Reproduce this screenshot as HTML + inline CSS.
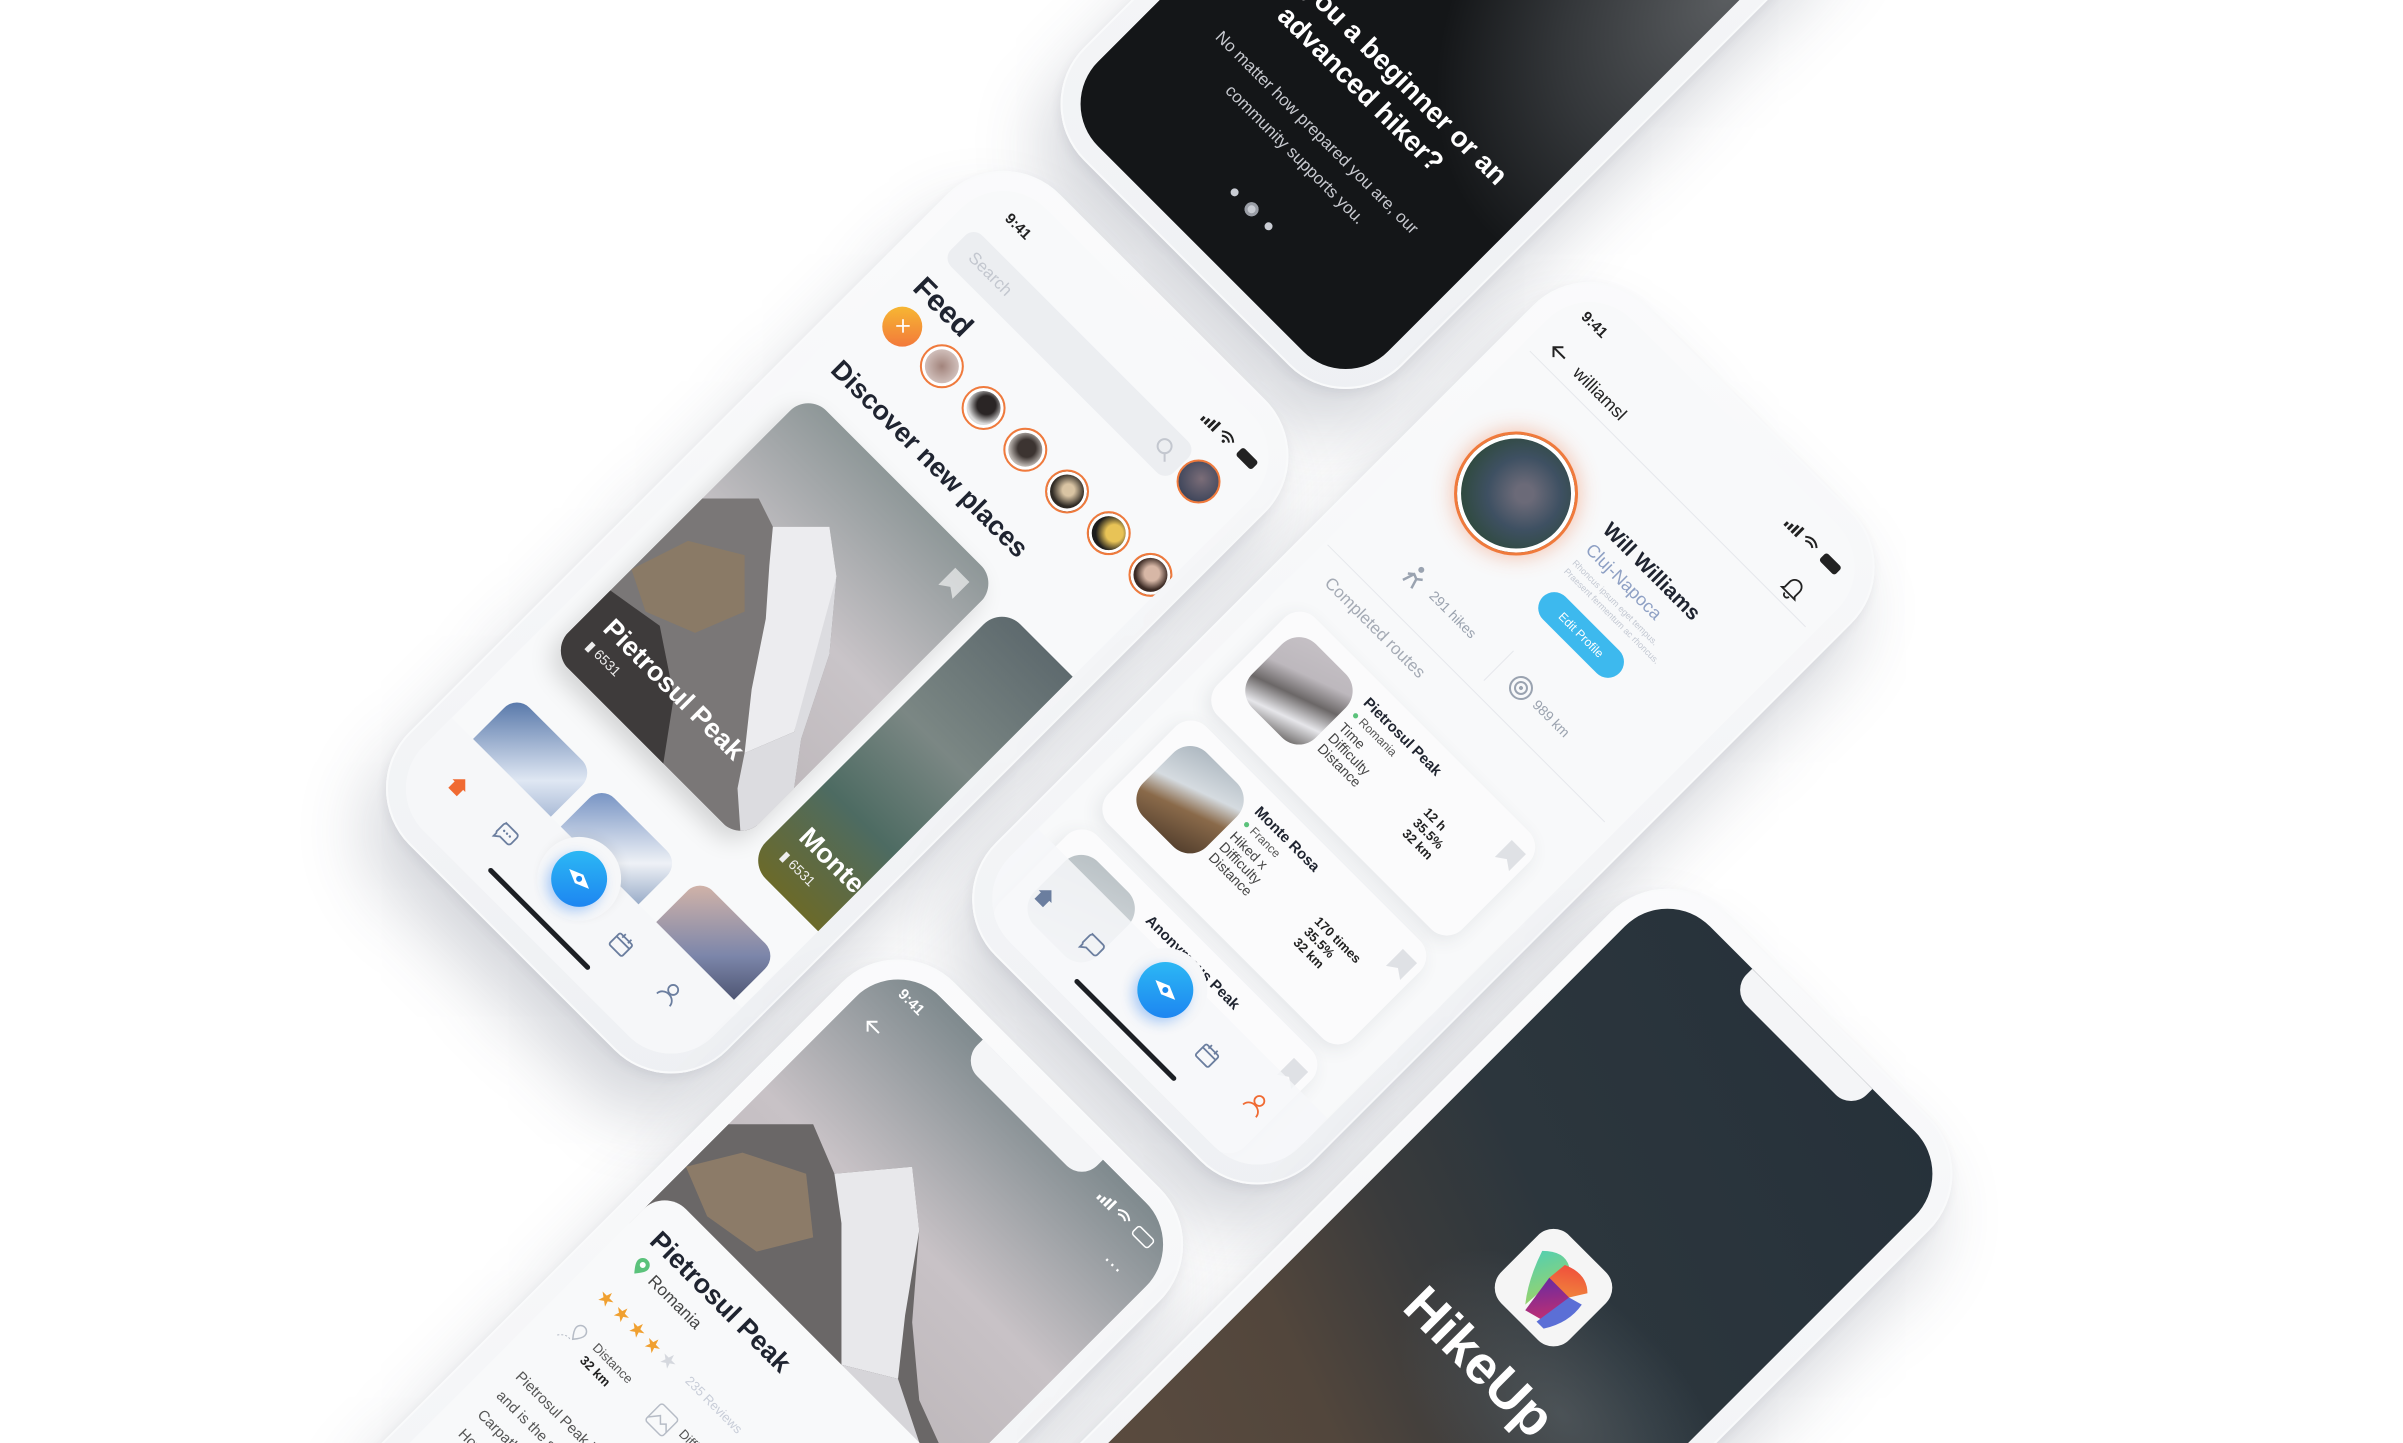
<!DOCTYPE html>
<html><head><meta charset="utf-8">
<style>
html,body{margin:0;padding:0;width:2403px;height:1443px;overflow:hidden;background:#fff;font-family:"Liberation Sans",sans-serif;}
#root{position:relative;width:2403px;height:1443px;overflow:hidden;background:#fff;}
#w{position:absolute;left:0;top:0;transform:rotate(45deg);transform-origin:0 0;}
.ph{position:absolute;width:450px;height:920px;border-radius:80px;background:linear-gradient(135deg,#fbfbfc,#eef0f3);box-shadow:16px 44px 70px rgba(60,70,90,.22),2px 4px 10px rgba(60,70,90,.08), inset 0 0 0 2px #f9fafb;}
.sc{position:absolute;left:20px;top:20px;width:410px;height:880px;border-radius:60px;overflow:hidden;background:#f8f9fa;}
.a{position:absolute;}
.t{position:absolute;white-space:nowrap;}
.av{position:absolute;width:40px;height:40px;border-radius:50%;border:2px solid #f07a3c;box-shadow:inset 0 0 0 3px #fff;}
.nav{position:absolute;left:0;top:780px;width:410px;height:100px;background:#f6f7f9;}
.card{position:absolute;left:25px;width:346px;height:138px;border-radius:22px;background:#fbfbfc;box-shadow:0 6px 18px rgba(60,70,90,.10);}
.cimg{position:absolute;left:17px;top:18px;width:90px;height:90px;border-radius:24px;overflow:hidden;}
</style></head><body>
<div id="root">
<div id="w">

<!-- ONBOARDING -->
<div class="ph" style="left:800px;top:-1573px;">
 <div class="sc" style="background:radial-gradient(ellipse 300px 420px at 400px 330px,#5a5d60 0%,#34373a 45%,#141618 80%),#121416;">
  <div class="t" style="left:0;width:410px;text-align:center;top:600px;color:#fff;font-weight:bold;font-size:28px;line-height:36px;">Are you a beginner or an<br>advanced hiker?</div>
  <div class="t" style="left:0;width:410px;text-align:center;top:700px;color:#c8cad0;font-size:17px;line-height:31px;">No matter how prepared you are, our<br>community supports you.</div>
  <div class="a" style="left:185px;top:812px;width:8px;height:8px;border-radius:50%;background:#c9ccd3"></div>
  <div class="a" style="left:206px;top:809px;width:14px;height:14px;border-radius:50%;background:#c9ccd3;box-shadow:inset 0 0 0 3px #9a9ea6"></div>
  <div class="a" style="left:233px;top:812px;width:8px;height:8px;border-radius:50%;background:#c9ccd3"></div>
 </div>
</div>

<!-- FEED -->
<div class="ph" style="left:807px;top:-612px;">
 <div class="sc">
  <div class="t" style="left:38px;top:24px;font-size:15px;font-weight:bold;color:#222;">9:41</div>
  <svg class="a" style="left:318px;top:26px" width="80" height="16"><rect x="0" y="9" width="3" height="5" fill="#222"/><rect x="5" y="7" width="3" height="7" fill="#222"/><rect x="10" y="4" width="3" height="10" fill="#222"/><rect x="15" y="2" width="3" height="12" fill="#222"/><path d="M24 7 q8 -7 16 0 M27 10 q5 -4 10 0" stroke="#222" stroke-width="2" fill="none"/><circle cx="32" cy="13" r="1.6" fill="#222"/><rect x="50" y="3" width="22" height="11" rx="3" fill="#222"/></svg>
  <div class="a" style="left:22px;top:64px;width:315px;height:44px;border-radius:12px;background:#eceef1;"></div>
  <div class="t" style="left:40px;top:76px;font-size:17px;color:#c3c7cf;">Search</div>
  <svg class="a" style="left:302px;top:74px" width="24" height="24"><circle cx="10" cy="10" r="7" stroke="#c3c7cf" stroke-width="2" fill="none"/><path d="M15 15 L21 21" stroke="#c3c7cf" stroke-width="2"/></svg>
  <div class="a" style="left:339px;top:63px;width:40px;height:40px;border-radius:50%;border:2px solid #f07a3c;background:radial-gradient(circle at 50% 40%,#7b6d78,#2c3a52);"></div>
  <div class="t" style="left:22px;top:126px;font-size:30px;font-weight:bold;color:#1f2430;">Feed</div>
  <div class="a" style="left:22px;top:165px;width:40px;height:40px;border-radius:50%;background:linear-gradient(135deg,#f7c331,#f26d3c);color:#fff;font-size:24px;text-align:center;line-height:40px;">×</div>
  <div class="av" style="left:76px;top:163px;background:radial-gradient(circle,#a2847c,#efe6e4);"></div>
  <div class="av" style="left:135px;top:163px;background:radial-gradient(circle at 50% 40%,#2a2525 30%,#dcdcdc 60%);"></div>
  <div class="av" style="left:194px;top:163px;background:radial-gradient(circle at 50% 45%,#3c3431 30%,#bdb7b2 60%);"></div>
  <div class="av" style="left:253px;top:163px;background:radial-gradient(circle at 50% 45%,#d9c4a3 20%,#2f2a24 55%);"></div>
  <div class="av" style="left:312px;top:163px;background:radial-gradient(circle at 60% 40%,#e8c356 25%,#1d1d1d 55%);"></div>
  <div class="av" style="left:371px;top:163px;background:radial-gradient(circle at 50% 45%,#d7b7a6 25%,#3b2a24 55%);"></div>
  <div class="t" style="left:22px;top:244px;font-size:27px;font-weight:bold;color:#1f2430;">Discover new places</div>
  <div class="a" style="left:22px;top:298px;width:270px;height:365px;border-radius:26px;overflow:hidden;box-shadow:0 12px 24px rgba(0,0,0,.15);">
   <svg width="270" height="365"><defs><linearGradient id="sk" x1="0" y1="0" x2="0" y2="1"><stop offset="0" stop-color="#8e9798"/><stop offset=".45" stop-color="#c9c4c8"/><stop offset="1" stop-color="#b9b3b6"/></linearGradient></defs>
   <rect width="270" height="365" fill="url(#sk)"/>
   <polygon points="0,150 40,110 70,120 110,80 150,110 200,170 240,250 270,290 270,365 0,365" fill="#7a7777"/>
   <polygon points="70,120 110,80 150,110 190,170 230,250 210,300 170,250 130,190 95,150" fill="#ececef"/>
   <polygon points="150,110 200,170 240,250 270,290 270,365 230,330 210,300 230,250" fill="#dcdce0"/>
   <polygon points="20,190 70,160 110,200 90,250 40,270 0,250" fill="#8a7a66"/>
   <polygon points="0,280 60,270 120,310 160,365 0,365" fill="#3e3b3b"/></svg>
   <div class="t" style="left:22px;top:290px;color:#fff;font-size:27px;font-weight:bold;">Pietrosul Peak</div>
   <div class="t" style="left:22px;top:325px;color:#eee;font-size:14px;">▮ 6531</div>
   <svg class="a" style="left:226px;top:18px" width="24" height="28"><path d="M2 2 H22 V26 L12 19 L2 26 Z" fill="#fff" opacity=".6"/></svg>
  </div>
  <div class="a" style="left:310px;top:312px;width:270px;height:360px;border-radius:26px;overflow:hidden;background:linear-gradient(180deg,#5e6a6e 0%,#7b8784 40%,#4d6b62 70%,#6b6a2a 100%);">
   <div class="t" style="left:20px;top:285px;color:#fff;font-size:27px;font-weight:bold;">Monte Rosa</div>
   <div class="t" style="left:20px;top:322px;color:#eee;font-size:14px;">▮ 6531</div>
  </div>
  <div class="a" style="left:30px;top:718px;width:110px;height:110px;border-radius:18px;background:linear-gradient(135deg,#4d6fa4,#dfe7f3 55%,#7a93bd);"></div>
  <div class="a" style="left:154px;top:722px;width:110px;height:110px;border-radius:18px;background:linear-gradient(135deg,#6c8bbf,#eef1f6 50%,#4d6fa0);"></div>
  <div class="a" style="left:289px;top:718px;width:110px;height:110px;border-radius:18px;background:linear-gradient(135deg,#d9b7a8,#7c86aa 50%,#2b3048);"></div>
  <div class="nav"></div>
  <svg class="a" style="left:42px;top:812px" width="22" height="22"><path d="M2 11 L11 2 L20 11 L17 11 L17 20 L5 20 L5 11 Z" fill="#f06a32"/></svg>
  <svg class="a" style="left:108px;top:812px" width="28" height="26"><path d="M4 4 h16 a3 3 0 0 1 3 3 v8 a3 3 0 0 1 -3 3 h-10 l-5 4 v-4 a3 3 0 0 1 -1 -3 v-8 a3 3 0 0 1 3 -3z" fill="none" stroke="#6b7e9f" stroke-width="1.8"/><circle cx="9" cy="11" r="1.2" fill="#6b7e9f"/><circle cx="13" cy="11" r="1.2" fill="#6b7e9f"/><circle cx="17" cy="11" r="1.2" fill="#6b7e9f"/></svg>
  <div class="a" style="left:162px;top:762px;width:84px;height:84px;border-radius:50%;background:#f6f7f9;box-shadow:0 -4px 10px rgba(0,0,0,.05);"></div>
  <div class="a" style="left:176px;top:776px;width:56px;height:56px;border-radius:50%;background:linear-gradient(135deg,#2fc2f5,#1a7bf0);box-shadow:0 6px 12px rgba(30,120,240,.35);"></div>
  <svg class="a" style="left:186px;top:786px" width="36" height="36"><path d="M4 18 L18 12 L32 18 L18 24 Z" fill="#fff"/><circle cx="18" cy="18" r="3" fill="#1a8af0"/></svg>
  <svg class="a" style="left:268px;top:808px" width="24" height="24"><rect x="3" y="5" width="18" height="16" rx="2" fill="none" stroke="#6b7e9f" stroke-width="1.8"/><path d="M3 10 H21 M8 2 V7 M16 2 V7" stroke="#6b7e9f" stroke-width="1.8"/></svg>
  <svg class="a" style="left:337px;top:808px" width="24" height="24"><circle cx="12" cy="8" r="5" fill="none" stroke="#6b7e9f" stroke-width="1.8"/><path d="M3 22 a9 8 0 0 1 18 0" fill="none" stroke="#6b7e9f" stroke-width="1.8"/></svg>
  <div class="a" style="left:133px;top:858px;width:142px;height:5px;border-radius:3px;background:#1c1f24;"></div>
 </div>
</div>

<!-- PROFILE -->
<div class="ph" style="left:1300px;top:-948px;">
 <div class="sc">
  <div class="t" style="left:22px;top:22px;font-size:15px;font-weight:bold;color:#222;">9:41</div>
  <svg class="a" style="left:312px;top:24px" width="80" height="16"><rect x="0" y="9" width="3" height="5" fill="#222"/><rect x="5" y="7" width="3" height="7" fill="#222"/><rect x="10" y="4" width="3" height="10" fill="#222"/><rect x="15" y="2" width="3" height="12" fill="#222"/><path d="M24 7 q8 -7 16 0 M27 10 q5 -4 10 0" stroke="#222" stroke-width="2" fill="none"/><rect x="50" y="3" width="22" height="11" rx="3" fill="#222"/></svg>
  <svg class="a" style="left:20px;top:64px" width="24" height="22"><path d="M20 11 H4 M11 4 L4 11 L11 18" stroke="#222" stroke-width="2" fill="none"/></svg>
  <div class="t" style="left:56px;top:65px;font-size:18px;color:#222;">williamsl</div>
  <svg class="a" style="left:352px;top:63px" width="24" height="26"><path d="M5 18 V11 a7 7 0 0 1 14 0 V18 L21 20 H3 Z M9 22 a3 3 0 0 0 6 0" fill="none" stroke="#222" stroke-width="1.8"/></svg>
  <div class="a" style="left:10px;top:94px;width:390px;height:1px;background:#e6e8ec;"></div>
  <div class="a" style="left:39px;top:143px;width:118px;height:118px;border-radius:50%;border:3px solid #f07a3c;box-shadow:0 0 22px rgba(240,110,60,.45),inset 0 0 0 4px #fff;background:radial-gradient(circle at 55% 45%,#6b6a78 10%,#3e5062 40%,#2f4a3e 70%);"></div>
  <div class="t" style="left:188px;top:153px;font-size:21px;font-weight:bold;color:#1f2430;">Will Williams</div>
  <div class="t" style="left:190px;top:181px;font-size:18px;color:#8ea0c4;">Cluj-Napoca</div>
  <div class="t" style="left:190px;top:206px;font-size:9px;line-height:12px;color:#c3c8d2;">Rhoncus ipsum eget tempus.<br>Praesent fermentum ac rhoncus.</div>
  <div class="a" style="left:193px;top:243px;width:108px;height:32px;border-radius:16px;background:#3db9ee;color:#fff;font-size:12px;text-align:center;line-height:32px;">Edit Profile</div>
  <svg class="a" style="left:74px;top:320px" width="28" height="28"><circle cx="14" cy="6" r="3" fill="#9aa3b0"/><path d="M8 26 L12 14 L17 16 L20 26 M12 14 L7 18 M17 16 L22 12" stroke="#9aa3b0" stroke-width="2.5" fill="none"/></svg>
  <div class="t" style="left:112px;top:327px;font-size:14px;color:#9aa2ae;">291 hikes</div>
  <div class="a" style="left:210px;top:318px;width:1px;height:42px;background:#e6e8ec;"></div>
  <svg class="a" style="left:228px;top:325px" width="28" height="28"><circle cx="14" cy="14" r="11" fill="none" stroke="#9aa3b0" stroke-width="2"/><circle cx="14" cy="14" r="6" fill="none" stroke="#9aa3b0" stroke-width="2"/><circle cx="14" cy="14" r="2" fill="#9aa3b0"/></svg>
  <div class="t" style="left:262px;top:331px;font-size:14px;color:#9aa2ae;">989 km</div>
  <div class="a" style="left:4px;top:374px;width:392px;height:1px;background:#e6e8ec;"></div>
  <div class="t" style="left:29px;top:390px;font-size:17px;color:#a5abb5;">Completed routes</div>

  <div class="card" style="top:435px;">
   <div class="cimg" style="background:linear-gradient(160deg,#c6c1c6 0%,#bdb8bd 35%,#6b6767 55%,#e6e6ea 75%,#55514f 100%);"></div>
   <div class="t" style="left:116px;top:14px;font-size:15px;font-weight:bold;color:#1f2430;">Pietrosul Peak</div>
   <div class="t" style="left:116px;top:33px;font-size:12px;color:#555;"><span style="color:#5bc27b">●</span> Romania</div>
   <div class="t" style="left:116px;top:50px;font-size:14px;line-height:15px;color:#444;">Time<br>Difficulty<br>Distance</div>
   <div class="t" style="left:236px;top:50px;font-size:13px;line-height:15px;font-weight:bold;color:#222;">12 h<br>35.5%<br>32 km</div>
   <svg class="a" style="left:316px;top:16px" width="24" height="28"><path d="M2 2 H22 V26 L12 19 L2 26 Z" fill="#dfe1e5"/></svg>
  </div>
  <div class="card" style="top:589px;">
   <div class="cimg" style="background:linear-gradient(160deg,#a9b4bd 0%,#d5dbe0 40%,#8a6a4a 60%,#4d3a2a 100%);"></div>
   <div class="t" style="left:116px;top:14px;font-size:15px;font-weight:bold;color:#1f2430;">Monte Rosa</div>
   <div class="t" style="left:116px;top:33px;font-size:12px;color:#555;"><span style="color:#5bc27b">●</span> France</div>
   <div class="t" style="left:116px;top:50px;font-size:14px;line-height:15px;color:#444;">Hiked x<br>Difficulty<br>Distance</div>
   <div class="t" style="left:236px;top:50px;font-size:13px;line-height:15px;font-weight:bold;color:#222;">170 times<br>35.5%<br>32 km</div>
   <svg class="a" style="left:316px;top:16px" width="24" height="28"><path d="M2 2 H22 V26 L12 19 L2 26 Z" fill="#dfe1e5"/></svg>
  </div>
  <div class="card" style="top:743px;">
   <div class="cimg" style="background:linear-gradient(160deg,#b8c0c4,#dfe3e6);"></div>
   <div class="t" style="left:116px;top:14px;font-size:15px;font-weight:bold;color:#1f2430;">Anonymous Peak</div>
   <svg class="a" style="left:316px;top:16px" width="24" height="28"><path d="M2 2 H22 V26 L12 19 L2 26 Z" fill="#dfe1e5"/></svg>
  </div>
  <div class="nav" style="background:rgba(246,247,249,.85);"></div>
  <svg class="a" style="left:42px;top:812px" width="22" height="22"><path d="M2 11 L11 2 L20 11 L17 11 L17 20 L5 20 L5 11 Z" fill="#6b7e9f"/></svg>
  <svg class="a" style="left:108px;top:812px" width="28" height="26"><path d="M4 4 h16 a3 3 0 0 1 3 3 v8 a3 3 0 0 1 -3 3 h-10 l-5 4 v-4 a3 3 0 0 1 -1 -3 v-8 a3 3 0 0 1 3 -3z" fill="none" stroke="#6b7e9f" stroke-width="1.8"/></svg>
  <div class="a" style="left:162px;top:762px;width:84px;height:84px;border-radius:50%;background:#f6f7f9;"></div>
  <div class="a" style="left:176px;top:776px;width:56px;height:56px;border-radius:50%;background:linear-gradient(135deg,#2fc2f5,#1a7bf0);box-shadow:0 6px 12px rgba(30,120,240,.35);"></div>
  <svg class="a" style="left:186px;top:786px" width="36" height="36"><path d="M4 18 L18 12 L32 18 L18 24 Z" fill="#fff"/><circle cx="18" cy="18" r="3" fill="#1a8af0"/></svg>
  <svg class="a" style="left:268px;top:808px" width="24" height="24"><rect x="3" y="5" width="18" height="16" rx="2" fill="none" stroke="#6b7e9f" stroke-width="1.8"/><path d="M3 10 H21 M8 2 V7 M16 2 V7" stroke="#6b7e9f" stroke-width="1.8"/></svg>
  <svg class="a" style="left:337px;top:808px" width="24" height="24"><circle cx="12" cy="8" r="5" fill="none" stroke="#f06a32" stroke-width="1.8"/><path d="M3 22 a9 8 0 0 1 18 0" fill="none" stroke="#f06a32" stroke-width="1.8"/></svg>
  <div class="a" style="left:133px;top:858px;width:142px;height:5px;border-radius:3px;background:#1c1f24;"></div>
 </div>
</div>

<!-- DETAIL -->
<div class="ph" style="left:1290px;top:20px;">
 <div class="sc" style="background:#f8f9fa;">
  <svg class="a" style="left:0;top:0" width="410" height="380"><defs><linearGradient id="sk2" x1="0" y1="0" x2="0" y2="1"><stop offset="0" stop-color="#7f8a8e"/><stop offset=".5" stop-color="#c8c2c6"/><stop offset="1" stop-color="#bbb5b8"/></linearGradient></defs>
   <rect width="410" height="380" fill="url(#sk2)"/>
   <polygon points="0,240 60,180 110,200 160,140 210,180 270,250 330,300 410,330 410,380 0,380" fill="#6a6767"/>
   <polygon points="110,200 160,140 210,180 260,250 300,300 250,330 200,280 150,230" fill="#e8e8eb"/>
   <polygon points="30,250 90,220 140,260 110,310 50,320 0,300" fill="#8c7b68"/>
   <polygon points="250,330 300,300 360,330 410,350 410,380 280,380" fill="#d6d5d9"/></svg>
  <div class="a" style="left:120px;top:0;width:170px;height:30px;border-radius:0 0 22px 22px;background:#f4f5f7;"></div>
  <div class="t" style="left:28px;top:16px;font-size:15px;font-weight:bold;color:#fff;">9:41</div>
  <svg class="a" style="left:22px;top:58px" width="24" height="22"><path d="M20 11 H4 M11 4 L4 11 L11 18" stroke="#fff" stroke-width="2" fill="none"/></svg>
  <div class="t" style="left:360px;top:54px;font-size:22px;color:#fff;">···</div>
  <svg class="a" style="left:312px;top:18px" width="80" height="16"><rect x="0" y="9" width="3" height="5" fill="#fff"/><rect x="5" y="7" width="3" height="7" fill="#fff"/><rect x="10" y="4" width="3" height="10" fill="#fff"/><rect x="15" y="2" width="3" height="12" fill="#fff"/><path d="M24 7 q8 -7 16 0 M27 10 q5 -4 10 0" stroke="#fff" stroke-width="2" fill="none"/><rect x="50" y="3" width="22" height="11" rx="3" fill="none" stroke="#fff" stroke-width="1.5"/></svg>
  <div class="a" style="left:0;top:330px;width:410px;height:560px;border-radius:30px 30px 0 0;background:#f8f9fa;"></div>
  <div class="t" style="left:27px;top:356px;font-size:27px;font-weight:bold;color:#1f2430;">Pietrosul Peak</div>
  <svg class="a" style="left:31px;top:393px" width="16" height="20"><path d="M8 19 C2 12 1 9 1 7 a7 7 0 0 1 14 0 c0 2 -1 5 -7 12z" fill="#5bc27b"/><circle cx="8" cy="7" r="3" fill="#fff"/></svg>
  <div class="t" style="left:54px;top:394px;font-size:17px;color:#444;">Romania</div>
  <div class="t" style="left:28px;top:437px;font-size:20px;letter-spacing:4px;color:#f0a030;">★★★★<span style="color:#d5d8de">★</span></div>
  <div class="t" style="left:151px;top:441px;font-size:13px;color:#c8cdd8;">235 Reviews</div>
  <svg class="a" style="left:26px;top:484px" width="26" height="28"><path d="M16 18 C11 12 10 9 10 7 a6 6 0 0 1 12 0 c0 2 -1 5 -6 11z" fill="none" stroke="#b6bcc6" stroke-width="1.5"/><path d="M2 26 q6 -8 12 -6" stroke="#b6bcc6" stroke-dasharray="2 2" fill="none"/></svg>
  <div class="t" style="left:62px;top:483px;font-size:13px;color:#555;">Distance</div>
  <div class="t" style="left:62px;top:501px;font-size:13px;font-weight:bold;color:#222;">32 km</div>
  <svg class="a" style="left:148px;top:482px" width="28" height="28"><rect x="2" y="2" width="24" height="24" rx="3" fill="none" stroke="#b6bcc6" stroke-width="1.5"/><path d="M2 22 L10 12 L16 18 L20 14 L26 20" fill="none" stroke="#b6bcc6" stroke-width="1.5"/></svg>
  <div class="t" style="left:184px;top:483px;font-size:13px;color:#555;">Difficulty</div>
  <div class="t" style="left:28px;top:552px;font-size:15px;line-height:27px;color:#555;">Pietrosul Peak is the highest peak in the<br>and is the second highest of the Eastern<br>Carpathians. It offers great views.<br>How to get there</div>
 </div>
</div>

<!-- HIKEUP -->
<div class="ph" style="left:1784px;top:-574px;">
 <div class="sc" style="background:linear-gradient(200deg,#26313a 0%,#2c363d 40%,#3a3b3c 55%,#52463c 70%,#5d4d40 100%);">
  <div class="a" style="left:0;top:300px;width:410px;height:300px;background:radial-gradient(ellipse 200px 120px at 300px 150px,rgba(120,130,135,.35),rgba(0,0,0,0));"></div>
  <div class="a" style="left:120px;top:0;width:170px;height:30px;border-radius:0 0 22px 22px;background:#f4f5f7;"></div>
  <div class="a" style="left:157px;top:318px;width:96px;height:96px;border-radius:22px;background:#f5f5f5;"></div>
  <svg class="a" style="left:157px;top:318px" width="96" height="96">
   <defs><linearGradient id="g1" x1="0" y1="0" x2="1" y2="1"><stop offset="0" stop-color="#4fcfb4"/><stop offset="1" stop-color="#9bd36a"/></linearGradient>
   <linearGradient id="g2" x1="0" y1="0" x2="1" y2="1"><stop offset="0" stop-color="#f0483c"/><stop offset="1" stop-color="#f0903c"/></linearGradient>
   <linearGradient id="g3" x1="0" y1="0" x2="1" y2="1"><stop offset="0" stop-color="#6a2aa0"/><stop offset="1" stop-color="#d0306a"/></linearGradient></defs>
   <path d="M14 30 Q30 14 44 22 L40 80 Q24 60 14 30Z" fill="url(#g1)"/>
   <path d="M40 24 Q62 14 76 28 L66 44 Q50 50 38 44Z" fill="url(#g2)"/>
   <path d="M38 44 L66 44 Q72 60 66 78 L44 84Z" fill="url(#g3)"/>
   <path d="M66 44 L80 40 Q84 62 70 84 L60 84Z" fill="#5b6fd6"/></svg>
  <div class="t" style="left:0;width:410px;text-align:center;top:440px;font-size:54px;font-weight:bold;color:#fff;">HikeUp</div>
 </div>
</div>

</div>
</div>
</body></html>
